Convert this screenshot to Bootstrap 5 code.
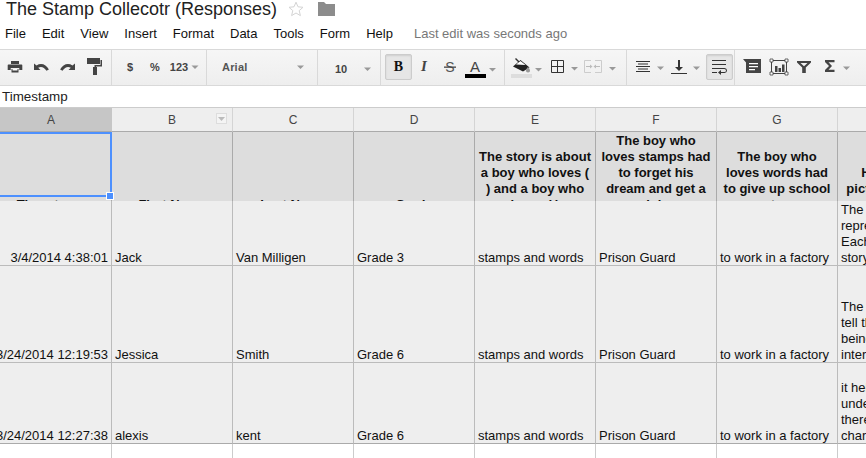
<!DOCTYPE html>
<html lang="en">
<head>
<meta charset="utf-8">
<title>The Stamp Collecotr (Responses)</title>
<link href="https://cdn.jsdelivr.net/npm/bootstrap@5.3.0/dist/css/bootstrap.min.css" rel="stylesheet">
<style>
html,body{height:458px;overflow:hidden;background:#fff;font-family:"Liberation Sans",Arial,sans-serif;color:#222;font-size:13px}
.doc-head{height:18px;padding-left:6px;gap:11px}
.doc-title{font-size:18px;line-height:18px;margin:0;font-weight:400;color:#222;white-space:nowrap}
.menu-row{height:31px;padding:7px 0 0 5px;gap:16px;font-size:13px;line-height:18px}
.menu-row .nav-link{padding:0;color:#111;font-size:13px}
.last-edit{color:#777;margin-left:5px;font-size:13px}
.tbar{height:37px;border-top:1px solid #d9d9d9;border-bottom:1px solid #d9d9d9;background:linear-gradient(#f6f6f6,#eee)}
.tgroup{height:35px;border-right:1px solid #d9d9d9;flex:none}
.tg1{width:112px}.tg2{width:95px}.tg3{width:111px}.tg4{width:63px}.tg5{width:124px}.tg6{width:122px}.tg7{width:108px}.tg8{width:131px;border-right:0}
.tgroup svg{display:block;flex:none}
.tlabel{font-weight:700;font-size:11px;color:#444;text-align:center;line-height:34px;flex:none}
.sl-36{width:36px}.sl-14{width:14px}
.num-fmt{width:28px;padding-left:6px}
.font-name{width:89px;padding-left:15px;text-align:left;color:#555;letter-spacing:.2px}
.font-size{width:38px;padding-left:8px;line-height:38px}
.btn.tb-on{width:27px;height:26px;margin:4px 1px 0 4px;padding:0;border:1px solid #ccc;border-radius:2px;background:#e6e6e6;box-shadow:inset 0 1px 2px rgba(0,0,0,.1);display:flex;align-items:center;justify-content:center;font-weight:700;color:#111;font-size:14px;font-family:"Liberation Serif","Liberation Sans",serif;line-height:1}
.fbar{height:21px;padding-left:2px;font-size:13.4px;line-height:21px;color:#222}
.sheet-clip{overflow:hidden;height:351px}
.sheet{position:relative;width:960px;display:grid;grid-template-columns:112px repeat(7,121px);grid-template-rows:24px 69px 65px 97px 81px 14px;border-top:1px solid #ccc;font-size:13px;line-height:14px;color:#111}
.cell{border-right:1px solid #bbb;overflow:hidden;background:#eee;padding:0 3px;display:flex;align-items:flex-end;white-space:nowrap}
.rowline{border-bottom:1px solid #bbb}
.rowlast{border-bottom:1px solid #aaa}
.date{justify-content:flex-end}
.cell-h{display:block;white-space:nowrap;line-height:16px;margin-bottom:-1px}
.colh{background:#eee;border-right:1px solid #d4d4d4;border-bottom:1px solid #aaa;font-size:12px;color:#444;display:flex;align-items:center;justify-content:center;position:relative;line-height:1}
.colh.on{background:#c6c6c6;padding-right:9px;border-right-color:#c6c6c6}
.drop{position:absolute;right:5px;top:5px;width:11px;height:11px;background:#f4f4f4;border:1px solid #ddd;display:flex;align-items:center;justify-content:center}
.cell.hd{display:block;background:#ddd;border-right:1px solid #aaa;padding:0}
.hd-in{height:81px;display:flex;align-items:flex-end;justify-content:center;text-align:center;font-weight:700;white-space:nowrap;font-size:13px;line-height:16px;color:#111}
.hd-a{padding-right:9px}
.blank{background:#fff;border-right:1px solid #ccc}
.sel{position:absolute;left:-3px;top:24px;width:115px;height:65px;border:2px solid #4d90fe;pointer-events:none}
.sel-handle{position:absolute;right:-3px;bottom:-4px;width:6px;height:6px;background:#4d90fe;outline:1px solid #fff}
</style>
</head>
<body>
<header>
  <div class="doc-head d-flex align-items-center">
    <h1 class="doc-title">The Stamp Collecotr (Responses)</h1>
    <svg width="16" height="16" viewBox="0 0 16 16"><path d="M8 1.200l2 4.600 5 .5-3.800 3.300 1.200 5L8 12l-4.400 2.600 1.200-5L1 6.300l5-.5z" fill="#fff" stroke="#d4d4d4"/></svg>
    <svg class="ms-1" width="17" height="14" viewBox="0 0 17 14"><path d="M0 0h6l2 2h9v12H0z" fill="#8c8c8c"/></svg>
  </div>
  <nav class="nav menu-row align-items-start">
    <a class="nav-link" href="#">File</a><a class="nav-link" href="#">Edit</a><a class="nav-link" href="#">View</a><a class="nav-link" href="#">Insert</a><a class="nav-link" href="#">Format</a><a class="nav-link" href="#">Data</a><a class="nav-link" href="#">Tools</a><a class="nav-link" href="#">Form</a><a class="nav-link" href="#">Help</a>
    <span class="last-edit">Last edit was seconds ago</span>
  </nav>
</header>

<div class="tbar d-flex">
  <div class="tgroup tg1 d-flex">
    <svg width="111" height="35" viewBox="0 50 111 35" fill="#444">
      <path d="M11 61h8v3h-8z"/><path d="M8.500 64.500h13a.8.8 0 0 1 .8.8V70h-3v-2h-8.600v2h-3v-4.700a.8.8 0 0 1 .8-.8z"/><path d="M11.500 69h7v3.500h-7z"/><path d="M12.500 69h5v1.500h-5z" fill="#fff"/>
      <path d="M34 63.500v6.500h6.500l-2.300-2.300c2.800-1.700 6-.7 8.300 3l2.400-1.200c-2.700-5.400-8-7-12.400-4.100z"/>
      <path d="M75 63.500v6.500h-6.500l2.300-2.300c-2.800-1.700-6-.7-8.300 3l-2.400-1.200c2.700-5.400 8-7 12.400-4.100z"/>
      <path d="M87 58h13v6H87z"/><path d="M100.500 60h1.500v6.500h-6V68h-1.500v-3h6z"/><path d="M93 67h4v8h-4z"/>
    </svg>
  </div>
  <div class="tgroup tg2 d-flex">
    <span class="tlabel sl-36">$</span><span class="tlabel sl-14">%</span><span class="tlabel num-fmt">123</span>
    <svg width="16" height="35" viewBox="190 50 16 35"><path d="M191.500 65.500h7l-3.500 3.500z" fill="#999"/></svg>
  </div>
  <div class="tgroup tg3 d-flex">
    <span class="tlabel font-name">Arial</span>
    <svg width="21" height="35" viewBox="296 50 21 35"><path d="M297 65.500h7l-3.500 3.500z" fill="#999"/></svg>
  </div>
  <div class="tgroup tg4 d-flex">
    <span class="tlabel font-size">10</span>
    <svg width="24" height="35" viewBox="356 50 24 35"><path d="M364 67.500h7l-3.500 3.500z" fill="#999"/></svg>
  </div>
  <div class="tgroup tg5 d-flex">
    <button type="button" class="btn tb-on">B</button>
    <svg width="91" height="35" viewBox="413 50 91 35">
      <text x="424" y="71" text-anchor="middle" font-family="Liberation Serif" font-style="italic" font-weight="700" font-size="15" fill="#444">I</text>
      <text x="450" y="72" text-anchor="middle" font-family="Liberation Sans" font-size="14" fill="#555">S</text>
      <path d="M444 66.500h12v1.300h-12z" fill="#444"/>
      <text x="475" y="72" text-anchor="middle" font-family="Liberation Sans" font-size="15" fill="#444">A</text>
      <path d="M465 74h21v4h-21z" fill="#000"/>
      <path d="M489 68h7l-3.500 3.500z" fill="#999"/>
    </svg>
  </div>
  <div class="tgroup tg6 d-flex">
    <svg width="121" height="35" viewBox="505 50 121 35">
      <path d="M515 59l1-1 4 4-1 1z" fill="#333"/>
      <path d="M513 66.500l7.500-6.500 9 7.500-6.500 4z" fill="#222"/><path d="M516 64.500l4.500-3.500 5 4z" fill="#fff"/>
      <path d="M528 72.500c-1.500 0-2-1-2-2 0-1 1-2.500 2-3.500 1 1 2 2.500 2 3.500s-.5 2-2 2z" fill="#999"/>
      <path d="M511 74h21v4h-21z" fill="#ddd"/>
      <path d="M535 68h7l-3.500 3.500z" fill="#999"/>
      <path d="M551.500 60.500h12v12h-12zM557.500 60.500v12M551.500 66.500h12" fill="none" stroke="#333"/>
      <path d="M571 67h7l-3.500 3.500z" fill="#999"/>
      <path d="M591 60.500h-6.500v12h6.500M595 60.500h6.500v12h-6.500" fill="none" stroke="#ccc"/>
      <path d="M586 66h4v-1.500l2.500 2-2.500 2V67h-4zM600 66h-4v-1.500l-2.500 2 2.500 2V67h4z" fill="#bbb"/>
      <path d="M609 67h7l-3.500 3.500z" fill="#999"/>
    </svg>
  </div>
  <div class="tgroup tg7 d-flex">
    <svg width="75" height="35" viewBox="627 50 75 35">
      <path d="M636 61h14v1h-14zM638 63.500h10v1h-10zM636 66h14v1h-14zM638 68.500h10v1h-10zM636 71h14v1h-14z" fill="#333"/>
      <path d="M657 66.500h7l-3.500 3.500z" fill="#999"/>
      <path d="M678 60h2v7h3l-4 4-4-4h3zM671 73h16v1h-16z" fill="#333"/>
      <path d="M693 66.500h7l-3.500 3.500z" fill="#999"/>
    </svg>
    <button type="button" class="btn tb-on" aria-label="Wrap text">
      <svg width="15" height="16" viewBox="0 0 15 16"><path d="M0 1h14v1H0zM0 5h14v1H0zM0 9h12.500a2 2 0 0 1 0 5H8v-1h4.500a1 1 0 0 0 0-3H0zM0 13h5v1H0z" fill="#333"/><path d="M9 11v5l-3-2.500z" fill="#333"/></svg>
    </button>
  </div>
  <div class="tgroup tg8 d-flex">
    <svg width="131" height="35" viewBox="735 50 131 35">
      <path d="M743 59h18v14h-15V62.500z" fill="#444"/><path d="M749 63h9v1.300h-9zM749 66h9v1.300h-9zM749 69h6v1.300h-6z" fill="#fff"/>
      <path d="M771.500 60.500h15v13h-15z" fill="none" stroke="#444"/>
      <path d="M770 59h3v3h-3zM785 59h3v3h-3zM770 72h3v3h-3zM785 72h3v3h-3z" fill="#fff" stroke="#444" stroke-width=".8"/>
      <path d="M775 66h2.500v6H775zM778.500 68h2.500v4h-2.500zM782 64.500h2.500V72H782z" fill="#444"/>
      <path d="M797 61h14v1.500l-5.200 5v5.500h-3.600v-5.500L797 62.500zM800.500 63h7l-3.500 3.300z" fill="#444" fill-rule="evenodd"/>
      <path d="M825 60h9.500v2.200h-6l3.500 3.800-3.500 3.800h6V72H825v-2l4-4-4-4z" fill="#444"/>
      <path d="M843 66.500h7l-3.500 3.500z" fill="#999"/>
    </svg>
  </div>
</div>

<div class="fbar">Timestamp</div>

<div class="sheet-clip">
<main class="sheet">
  <div class="colh on">A</div>
  <div class="colh">B<span class="drop"><svg width="7" height="4" viewBox="0 0 7 4"><path d="M0 0h7L3.500 4z" fill="#bbb"/></svg></span></div>
  <div class="colh">C</div><div class="colh">D</div><div class="colh">E</div><div class="colh">F</div><div class="colh">G</div><div class="colh"><span>H</span></div>

  <div class="cell hd"><div class="hd-in hd-a">Timestamp</div></div>
  <div class="cell hd"><div class="hd-in">First Name</div></div>
  <div class="cell hd"><div class="hd-in">Last Name</div></div>
  <div class="cell hd"><div class="hd-in">Grade</div></div>
  <div class="cell hd"><div class="hd-in">The story is about<br>a boy who loves (<br>) and a boy who<br>loves ( )</div></div>
  <div class="cell hd"><div class="hd-in">The boy who<br>loves stamps had<br>to forget his<br>dream and get a<br>job</div></div>
  <div class="cell hd"><div class="hd-in">The boy who<br>loves words had<br>to give up school<br>to</div></div>
  <div class="cell hd"><div class="hd-in">How did the<br>pictures help tell<br>story?</div></div>

  <div class="cell rowline date">3/4/2014 4:38:01</div>
  <div class="cell rowline">Jack</div><div class="cell rowline">Van Milligen</div><div class="cell rowline">Grade 3</div><div class="cell rowline">stamps and words</div><div class="cell rowline">Prison Guard</div><div class="cell rowline">to work in a factory</div>
  <div class="cell rowline"><span class="cell-h">The pictures<br>represent the boys.<br>Each one shows the<br>story</span></div>

  <div class="cell rowline date">3/24/2014 12:19:53</div>
  <div class="cell rowline">Jessica</div><div class="cell rowline">Smith</div><div class="cell rowline">Grade 6</div><div class="cell rowline">stamps and words</div><div class="cell rowline">Prison Guard</div><div class="cell rowline">to work in a factory</div>
  <div class="cell rowline"><span class="cell-h">The pictures<br>tell the story by<br>being more<br>interesting</span></div>

  <div class="cell rowlast date">3/24/2014 12:27:38</div>
  <div class="cell rowlast">alexis</div><div class="cell rowlast">kent</div><div class="cell rowlast">Grade 6</div><div class="cell rowlast">stamps and words</div><div class="cell rowlast">Prison Guard</div><div class="cell rowlast">to work in a factory</div>
  <div class="cell rowlast"><span class="cell-h">it helps you<br>understand what<br>there is in the<br>characters</span></div>

  <div class="blank"></div><div class="blank"></div><div class="blank"></div><div class="blank"></div><div class="blank"></div><div class="blank"></div><div class="blank"></div><div class="blank"></div>

  <div class="sel"><span class="sel-handle"></span></div>
</main>
</div>
<script src="https://cdn.jsdelivr.net/npm/bootstrap@5.3.0/dist/js/bootstrap.bundle.min.js"></script>
</body>
</html>
